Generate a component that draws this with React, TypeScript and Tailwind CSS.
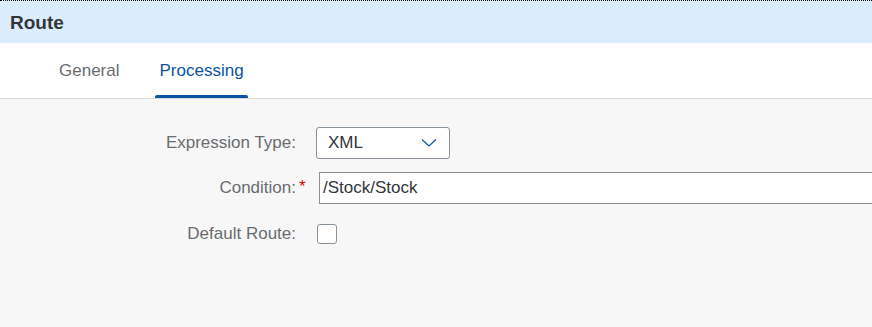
import React from "react";

export default function App() {
  const font = { fontFamily: '"Liberation Sans", Arial, sans-serif' };
  return (
    <div className="w-[872px] h-[327px] bg-[#f7f7f7] overflow-hidden flex flex-col" style={font}>
      <div className="h-[43px] bg-[#dbedfd] border-t border-dotted border-black flex items-center pl-[10px] shrink-0">
        <span className="text-[19px] font-bold text-[#32363a] leading-none">Route</span>
      </div>
      <div className="h-[56px] bg-white border-b border-[#d9d9d9] flex items-stretch pl-[55px] gap-[32px] shrink-0">
        <div className="px-1 flex items-center text-[17px] text-[#6a6d70] pt-[1px]">General</div>
        <div className="relative px-1 flex items-center text-[17px] text-[#0854a0] pt-[1px]">
          Processing
          <div className="absolute left-0 right-0 bottom-0 h-[3px] bg-[#0854a0] rounded-t-[2px]" />
        </div>
      </div>
      <div className="flex flex-col pt-[28px]">
        <div className="flex items-center h-[32px]">
          <div className="w-[296px] text-right text-[17px] text-[#6a6d70]">Expression Type:</div>
          <div className="ml-[20px] w-[134px] h-[32px] bg-white border border-[#89919a] rounded-[3px] flex items-center justify-between pl-[11px] pr-[12px]">
            <span className="text-[17px] text-[#32363a]">XML</span>
            <svg width="16" height="10" viewBox="0 0 16 10" fill="none">
              <path d="M1 1.5 L8 8 L15 1.5" stroke="#0854a0" strokeWidth="1.2" />
            </svg>
          </div>
        </div>
        <div className="flex items-center h-[32px] mt-[13px]">
          <div className="w-[296px] text-right text-[17px] text-[#6a6d70] relative">
            Condition:
            <span className="absolute left-[299px] top-[-1px] text-[#e00] text-[17px]">*</span>
          </div>
          <div className="ml-[23px] flex-1 h-[32px] bg-white border border-[#89919a] border-r-0 flex items-center pl-[3px]">
            <span className="text-[17px] text-[#32363a]">/Stock/Stock</span>
          </div>
        </div>
        <div className="flex items-center h-[32px] mt-[14px]">
          <div className="w-[296px] text-right text-[17px] text-[#6a6d70]">Default Route:</div>
          <div className="ml-[21px] w-[20px] h-[20px] bg-white border border-[#89919a] rounded-[3px]" />
        </div>
      </div>
    </div>
  );
}
